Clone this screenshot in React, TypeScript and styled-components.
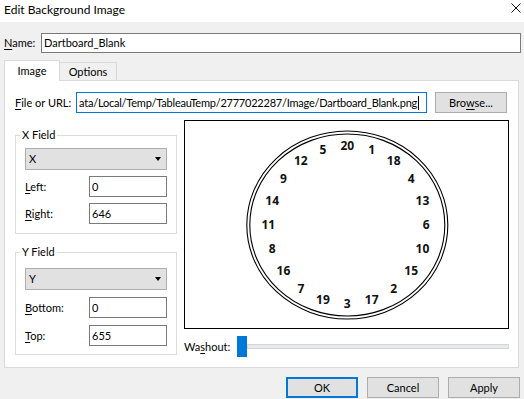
import React from 'react';
import styled, { createGlobalStyle } from 'styled-components';

const FONT = `Lato, "Liberation Sans", Arial, sans-serif`;

const Global = createGlobalStyle`
  html, body { margin: 0; padding: 0; background: #f0f0f0; }
  body { font-family: ${FONT}; font-size: 11px; color: #000; }
  * { box-sizing: border-box; }
`;

const Window = styled.div`
  width: 524px;
  height: 399px;
  display: flex;
  flex-direction: column;
  background: #f0f0f0;
  overflow: hidden;
  font-family: ${FONT};
  font-size: 11px;
  line-height: 14px;
`;

const TitleBar = styled.div`
  height: 22px;
  flex: none;
  background: #fff;
  display: flex;
  justify-content: space-between;
  align-items: flex-start;
  padding: 3px 3px 0 4px;
`;

const Title = styled.span`
  font-size: 12px;
  color: #000;
`;

const CloseBtn = styled.svg`
  width: 10px;
  height: 10px;
`;

const Body = styled.div`
  flex: 1;
  display: flex;
  flex-direction: column;
  padding: 11px 3px 0 4px;
`;

const Row = styled.div`
  display: flex;
  align-items: center;
`;

const Label = styled.label<{ $w: number }>`
  width: ${(p) => p.$w}px;
  flex: none;
  white-space: nowrap;
`;

const Key = styled.span`
  text-decoration: underline;
  text-underline-offset: 2px;
`;

const TextBox = styled.div<{ $w?: number; $h?: number; $focus?: boolean }>`
  ${(p) => (p.$w ? `width: ${p.$w}px; flex: none;` : 'flex: 1;')}
  height: ${(p) => p.$h ?? 21}px;
  border: 1px solid ${(p) => (p.$focus ? '#0078d7' : '#7a7a7a')};
  background: #fff;
  display: flex;
  align-items: center;
  padding-left: 2px;
  white-space: nowrap;
  overflow: hidden;
`;

const PathText = styled.span`
  letter-spacing: -0.22px;
`;

const Caret = styled.span`
  display: inline-block;
  width: 1px;
  height: 14px;
  background: #000;
  margin-left: 1px;
  flex: none;
`;

const TabStrip = styled.div`
  display: flex;
  align-items: flex-end;
  height: 21px;
  margin-top: 7px;
  margin-bottom: -1px;
  position: relative;
  z-index: 1;
`;

const Tab = styled.div<{ $active?: boolean; $w: number }>`
  width: ${(p) => p.$w}px;
  height: ${(p) => (p.$active ? 21 : 18)}px;
  margin-bottom: ${(p) => (p.$active ? 0 : 1)}px;
  background: ${(p) => (p.$active ? '#fff' : '#f0f0f0')};
  border: 1px solid #d9d9d9;
  border-bottom: none;
  ${(p) => (p.$active ? '' : 'border-left: none;')}
  display: flex;
  justify-content: center;
  padding-top: ${(p) => (p.$active ? 3 : 2)}px;
`;

const TabPanel = styled.div`
  height: 288px;
  margin-right: 2px;
  background: #fff;
  border: 1px solid #d9d9d9;
  padding: 11px 9px 0 10px;
  display: flex;
  flex-direction: column;
`;

const FileRow = styled.div`
  display: flex;
  align-items: center;
  height: 21px;
`;

const Button = styled.button<{ $default?: boolean }>`
  width: 72px;
  height: 21px;
  flex: none;
  background: #e1e1e1;
  border: ${(p) => (p.$default ? '2px solid #0078d7' : '1px solid #adadad')};
  font-family: ${FONT};
  font-size: 11px;
  color: #000;
  padding: 0;
  margin: 0;
`;

const Content = styled.div`
  display: flex;
  gap: 7px;
  margin-top: 7px;
`;

const LeftCol = styled.div`
  width: 162px;
  flex: none;
  display: flex;
  flex-direction: column;
  padding-top: 8px;
  gap: 11px;
`;

const Group = styled.fieldset<{ $padTop: number; $gap: number; $padBottom: number }>`
  margin: 0;
  min-width: 0;
  border: 1px solid #dcdcdc;
  padding: ${(p) => p.$padTop}px 9px ${(p) => p.$padBottom}px 9px;
  display: flex;
  flex-direction: column;
  gap: ${(p) => p.$gap}px;
`;

const Legend = styled.legend`
  padding: 0 2px;
  margin-left: -5px;
  line-height: 14px;
  font-size: 11px;
`;

const Select = styled.div`
  height: 22px;
  background: #e1e1e1;
  border: 1px solid #adadad;
  display: flex;
  align-items: center;
  justify-content: space-between;
  padding: 0 5px 0 3px;
`;

const Arrow = styled.span`
  width: 0;
  height: 0;
  border-left: 3.5px solid transparent;
  border-right: 3.5px solid transparent;
  border-top: 4px solid #000;
`;

const FieldRow = styled.div`
  display: flex;
  align-items: center;
  justify-content: space-between;
`;

const RightCol = styled.div`
  flex: 1;
  display: flex;
  flex-direction: column;
`;

const Preview = styled.div`
  height: 209px;
  border: 1px solid #000;
  background: #fff;
`;

const WashoutRow = styled.div`
  display: flex;
  align-items: center;
  height: 21px;
  margin-top: 7px;
`;

const Thumb = styled.div`
  width: 10px;
  height: 21px;
  background: #0078d7;
  flex: none;
`;

const Track = styled.div`
  flex: 1;
  height: 5px;
  background: #e7eaea;
  border: 1px solid #d6d6d6;
`;

const ButtonRow = styled.div`
  display: flex;
  justify-content: flex-end;
  gap: 9px;
  margin-top: 9px;
  padding-right: 1px;
`;

const ORDER = [20, 1, 18, 4, 13, 6, 10, 15, 2, 17, 3, 19, 7, 16, 8, 11, 14, 9, 12, 5];

const Dartboard = () => {
  const cx = 162.3;
  const cy = 103.5;
  const r = 79;
  return (
    <svg width="323" height="207" viewBox="0 0 323 207" style={{ display: 'block' }}>
      <ellipse cx={cx} cy={104} rx={100.5} ry={94} fill="none" stroke="#000" strokeWidth={1.1} />
      <ellipse cx={cx} cy={104} rx={97.5} ry={91} fill="none" stroke="#000" strokeWidth={1.1} />
      {ORDER.map((n, i) => {
        const a = (i * 18 * Math.PI) / 180;
        const x = cx + r * Math.sin(a);
        const y = cy - r * Math.cos(a);
        return (
          <text
            key={n}
            x={x}
            y={y}
            textAnchor="middle"
            dominantBaseline="central"
            fontFamily={`"Open Sans", "Liberation Sans", sans-serif`}
            fontWeight={700}
            fontSize={12}
            fill="#111"
          >
            {n}
          </text>
        );
      })}
    </svg>
  );
};

export default function App() {
  return (
    <>
      <Global />
      <Window>
        <TitleBar>
          <Title>Edit Background Image</Title>
          <CloseBtn viewBox="0 0 10 10">
            <path d="M0.5 0.5 L9.5 9.5 M9.5 0.5 L0.5 9.5" stroke="#111" strokeWidth="1" fill="none" />
          </CloseBtn>
        </TitleBar>
        <Body>
          <Row>
            <Label $w={37}>
              <Key>N</Key>ame:
            </Label>
            <TextBox $h={20}>Dartboard_Blank</TextBox>
          </Row>
          <TabStrip>
            <Tab $active $w={56}>Image</Tab>
            <Tab $w={57}>Options</Tab>
          </TabStrip>
          <TabPanel>
            <FileRow>
              <Label $w={61}>
                <Key>F</Key>ile or URL:
              </Label>
              <TextBox $w={351} $focus>
                <PathText>ata/Local/Temp/TableauTemp/2777022287/Image/Dartboard_Blank.png</PathText>
                <Caret />
              </TextBox>
              <Button style={{ marginLeft: 8 }}>
                Bro<Key>w</Key>se...
              </Button>
            </FileRow>
            <Content>
              <LeftCol>
                <Group $padTop={6} $gap={6} $padBottom={9}>
                  <Legend>X Field</Legend>
                  <Select>
                    X<Arrow />
                  </Select>
                  <FieldRow>
                    <Label $w={50}>
                      <Key>L</Key>eft:
                    </Label>
                    <TextBox $w={78}>0</TextBox>
                  </FieldRow>
                  <FieldRow>
                    <Label $w={50}>
                      <Key>R</Key>ight:
                    </Label>
                    <TextBox $w={78}>646</TextBox>
                  </FieldRow>
                </Group>
                <Group $padTop={9} $gap={7} $padBottom={8}>
                  <Legend>Y Field</Legend>
                  <Select>
                    Y<Arrow />
                  </Select>
                  <FieldRow>
                    <Label $w={50}>
                      <Key>B</Key>ottom:
                    </Label>
                    <TextBox $w={78}>0</TextBox>
                  </FieldRow>
                  <FieldRow>
                    <Label $w={50}>
                      <Key>T</Key>op:
                    </Label>
                    <TextBox $w={78}>655</TextBox>
                  </FieldRow>
                </Group>
              </LeftCol>
              <RightCol>
                <Preview>
                  <Dartboard />
                </Preview>
                <WashoutRow>
                  <Label $w={53}>
                    Wa<Key>s</Key>hout:
                  </Label>
                  <Thumb />
                  <Track />
                </WashoutRow>
              </RightCol>
            </Content>
          </TabPanel>
          <ButtonRow>
            <Button $default>OK</Button>
            <Button>Cancel</Button>
            <Button>Apply</Button>
          </ButtonRow>
        </Body>
      </Window>
    </>
  );
}
